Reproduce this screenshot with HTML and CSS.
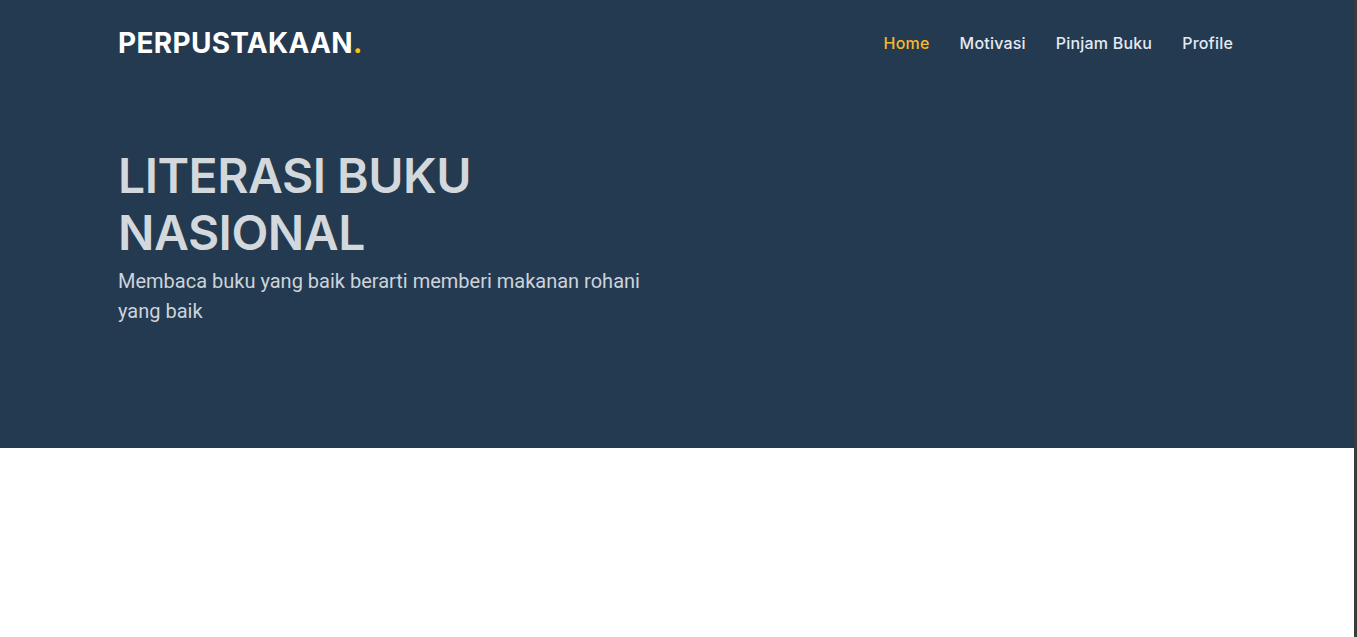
FILE: index.html
```html
<!DOCTYPE html>
<html lang="id">
<head>
<meta charset="utf-8">
<title>Perpustakaan</title>
<link rel="stylesheet" href="styles.css">
</head>
<body>
<div class="window">
  <div class="page">
    <header class="hero">
      <nav class="navbar">
        <div class="container nav-inner">
          <a class="brand" href="#">PERPUSTAKAAN<span class="dot">.</span></a>
          <ul class="menu">
            <li><a class="active" href="#">Home</a></li>
            <li><a href="#">Motivasi</a></li>
            <li><a href="#">Pinjam Buku</a></li>
            <li><a href="#">Profile</a></li>
          </ul>
        </div>
      </nav>
      <div class="container hero-body">
        <div class="hero-text">
          <h1 class="title">LITERASI BUKU NASIONAL</h1>
          <p class="lead">Membaca buku yang baik berarti memberi makanan rohani yang baik</p>
        </div>
      </div>
    </header>
    <main class="content"></main>
  </div>
  <div class="edge"></div>
</div>
</body>
</html>
```
FILE: styles.css
```css
html, body {
  margin: 0;
  padding: 0;
  height: 100%;
}
body {
  background: #ffffff;
  font-family: "Inter", "Liberation Sans", sans-serif;
}
.window {
  display: flex;
  min-height: 637px;
}
.page {
  flex: 1;
  min-width: 0;
}
.edge {
  width: 3px;
  background: #3b3b3b;
}
.hero {
  background: #243a51;
  height: 448px;
}
.container {
  padding: 0 121px 0 118px;
}
.navbar {
  height: 86px;
}
.nav-inner {
  height: 100%;
  display: flex;
  align-items: center;
  justify-content: space-between;
}
.brand {
  color: #ffffff;
  text-decoration: none;
  font-family: "Inter", sans-serif;
  font-weight: 700;
  font-size: 28px;
  letter-spacing: 0.3px;
}
.brand .dot {
  color: #ffc107;
}
.menu {
  list-style: none;
  display: flex;
  gap: 30px;
  margin: 0;
  padding: 0;
}
.menu a {
  color: #e4eaf2;
  text-decoration: none;
  font-family: "Inter", sans-serif;
  font-weight: 500;
  font-size: 16px;
  letter-spacing: 0.2px;
}
.menu a.active {
  color: #f6b92c;
}
.hero-body {
  padding-top: 61px;
}
.hero-text {
  width: 546px;
}
.title {
  margin: 0;
  color: #d3d8dd;
  font-family: "Inter", sans-serif;
  font-weight: 600;
  font-size: 48px;
  line-height: 57px;
  letter-spacing: -0.5px;
}
.lead {
  margin: 5px 0 0;
  color: #cdd3da;
  font-family: "Roboto", sans-serif;
  font-size: 20px;
  line-height: 30px;
}
```
